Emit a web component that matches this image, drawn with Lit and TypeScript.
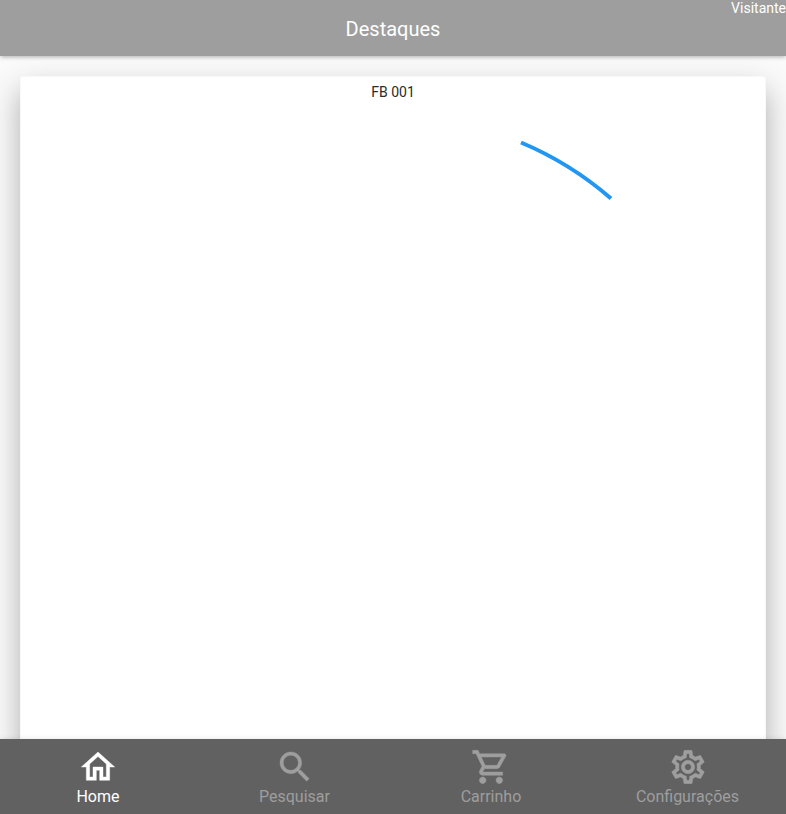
import { LitElement, html, css, svg } from "lit";
import { customElement } from "lit/decorators.js";
import { classMap } from "lit/directives/class-map.js";

const TABS = [
  {
    label: "Home",
    active: true,
    path: "M12 5.69l5 4.5V18h-2v-6H9v6H7v-7.81l5-4.5M12 3L2 12h3v8h6v-6h2v6h6v-8h3L12 3z",
  },
  {
    label: "Pesquisar",
    active: false,
    path: "M15.5 14h-.79l-.28-.27C15.41 12.59 16 11.11 16 9.5 16 5.91 13.09 3 9.5 3S3 5.91 3 9.5 5.91 16 9.5 16c1.61 0 3.09-.59 4.23-1.57l.27.28v.79l5 4.99L20.49 19l-4.99-5zm-6 0C7.01 14 5 11.99 5 9.5S7.01 5 9.5 5 14 7.01 14 9.5 11.99 14 9.5 14z",
  },
  {
    label: "Carrinho",
    active: false,
    path: "M15.55 13c.75 0 1.41-.41 1.75-1.03l3.58-6.49c.37-.66-.11-1.48-.87-1.48H5.21l-.94-2H1v2h2l3.6 7.59-1.35 2.44C4.52 15.37 5.48 17 7 17h12v-2H7l1.1-2h7.45zM6.16 6h12.15l-2.76 5H8.53L6.16 6zM7 18c-1.1 0-1.99.9-1.99 2S5.9 22 7 22s2-.9 2-2-.9-2-2-2zm10 0c-1.1 0-1.99.9-1.99 2s.89 2 1.99 2 2-.9 2-2-.9-2-2-2z",
  },
  {
    label: "Configurações",
    active: false,
    path: "M19.43 12.98c.04-.32.07-.64.07-.98s-.03-.66-.07-.98l2.11-1.65c.19-.15.24-.42.12-.64l-2-3.46c-.09-.16-.26-.25-.44-.25-.06 0-.12.01-.17.03l-2.49 1c-.52-.4-1.08-.73-1.69-.98l-.38-2.65C14.46 2.18 14.25 2 14 2h-4c-.25 0-.46.18-.49.42l-.38 2.65c-.61.25-1.17.59-1.69.98l-2.49-1c-.06-.02-.12-.03-.18-.03-.17 0-.34.09-.43.25l-2 3.46c-.13.22-.07.49.12.64l2.11 1.65c-.04.32-.07.65-.07.98s.03.66.07.98l-2.11 1.65c-.19.15-.24.42-.12.64l2 3.46c.09.16.26.25.44.25.06 0 .12-.01.17-.03l2.49-1c.52.4 1.08.73 1.69.98l.38 2.65c.03.24.24.42.49.42h4c.25 0 .46-.18.49-.42l.38-2.65c.61-.25 1.17-.59 1.69-.98l2.49 1c.06.02.12.03.18.03.17 0 .34-.09.43-.25l2-3.46c.12-.22.07-.49-.12-.64l-2.11-1.65zm-1.98-1.71c.04.31.05.52.05.73 0 .21-.02.43-.05.73l-.14 1.13.89.7 1.08.84-.7 1.21-1.27-.51-1.04-.42-.9.68c-.43.32-.84.56-1.25.73l-1.06.43-.16 1.13-.2 1.35h-1.4l-.19-1.35-.16-1.13-1.06-.43c-.43-.18-.83-.41-1.23-.71l-.91-.7-1.06.43-1.27.51-.7-1.21 1.08-.84.89-.7-.14-1.13c-.03-.31-.05-.54-.05-.74s.02-.43.05-.73l.14-1.13-.89-.7-1.08-.84.7-1.21 1.27.51 1.04.42.9-.68c.43-.32.84-.56 1.25-.73l1.06-.43.16-1.13.2-1.35h1.39l.19 1.35.16 1.13 1.06.43c.43.18.83.41 1.23.71l.91.7 1.06-.43 1.27-.51.7 1.21-1.07.85-.89.7.14 1.13zM12 8c-2.21 0-4 1.79-4 4s1.79 4 4 4 4-1.79 4-4-1.79-4-4-4zm0 6c-1.1 0-2-.9-2-2s.9-2 2-2 2 .9 2 2-.9 2-2 2z",
  },
];

@customElement("app-root")
export class AppRoot extends LitElement {
  static styles = css`
    :host {
      display: flex;
      flex-direction: column;
      height: 100vh;
      overflow: hidden;
      background: #fafafa;
      font-family: Roboto, sans-serif;
    }
    .bar {
      position: relative;
      z-index: 1;
      flex: none;
      height: 56px;
      display: flex;
      align-items: center;
      justify-content: center;
      background: #9e9e9e;
      color: #fff;
      box-shadow: 0 2px 4px -1px rgba(0, 0, 0, 0.2), 0 1px 5px rgba(0, 0, 0, 0.12);
    }
    .title {
      font-size: 20px;
      line-height: 24px;
      padding-top: 2px;
    }
    .user {
      position: absolute;
      top: 0;
      right: 0;
      font-size: 14px;
      line-height: 16px;
    }
    main {
      flex: 1;
      min-height: 0;
      overflow: hidden;
      padding: 20px 20px 0;
    }
    .card {
      height: 720px;
      border-radius: 4px;
      background: #fff;
      box-shadow: inset 0 0 0 1px #f8f8f8, 0 14px 30px rgba(0, 0, 0, 0.31);
      display: flex;
      flex-direction: column;
      align-items: center;
    }
    .name {
      padding-top: 8px;
      font-size: 14px;
      line-height: 16px;
      color: #2b2b2b;
    }
    .spinner {
      width: 746px;
      height: 660px;
      flex: none;
      fill: none;
      stroke: #2196f3;
      stroke-width: 4;
    }
    nav {
      position: relative;
      z-index: 1;
      flex: none;
      height: 75px;
      display: grid;
      grid-template-columns: repeat(4, 1fr);
      background: #616161;
      box-shadow: 0 -1px 4px rgba(0, 0, 0, 0.08);
    }
    .tab {
      display: flex;
      flex-direction: column;
      align-items: center;
      padding: 8px 0.6px 0 0;
      color: #9e9e9e;
      font-size: 16px;
      line-height: 19px;
    }
    .active {
      color: #fff;
    }
    .icon {
      width: 40px;
      height: 40px;
      margin-left: 0.6px;
      fill: currentColor;
      stroke: currentColor;
      stroke-width: 0.25;
    }
  `;

  render() {
    return html`
      <header class="bar">
        <div class="title">Destaques</div>
        <div class="user">Visitante</div>
      </header>
      <main>
        <section class="card">
          <div class="name">FB 001</div>
          <svg class="spinner" viewBox="0 0 746 660">
            <path d="M501 42.5A335 335 0 0 1 591 98.5" />
          </svg>
        </section>
      </main>
      <nav>
        ${TABS.map(
          (tab) => html`
            <div class=${classMap({ tab: true, active: tab.active })}>
              <svg class="icon" viewBox="0 0 24 24">${svg`<path d=${tab.path} />`}</svg>
              <span>${tab.label}</span>
            </div>
          `
        )}
      </nav>
    `;
  }
}
